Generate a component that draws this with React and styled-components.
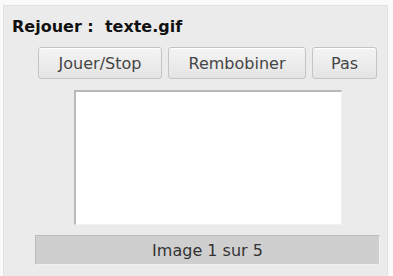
import React from 'react';
import styled, { createGlobalStyle } from 'styled-components';

const Global = createGlobalStyle`
    html, body {
        margin: 0;
        padding: 0;
        background: #fafafa;
    }
    body {
        font-family: "DejaVu Sans", "Liberation Sans", sans-serif;
    }
`

const Panel = styled.div`
    margin: 5px 5px 0 3px;
    height: 271px;
    box-sizing: border-box;
    background: #ebebeb;
    border: 1px solid #e2e2e2;
    border-bottom: none;
    padding: 10px 0 0 8px;
`

const Title = styled.div`
    font-size: 16px;
    font-weight: bold;
    color: #111;
    line-height: 21px;
    white-space: pre;
`

const Body = styled.div`
    width: 345px;
    margin: 10px 0 0 23px;
    display: flex;
    flex-direction: column;
    align-items: center;
`

const Toolbar = styled.div`
    display: flex;
    gap: 6px;
`

const Button = styled.button`
    height: 32px;
    width: ${p => p.w}px;
    box-sizing: border-box;
    font-family: inherit;
    font-size: 16px;
    color: #454545;
    background: linear-gradient(#f4f4f4, #e4e4e4);
    border: 1px solid #c4c4c4;
    border-radius: 3px;
    box-shadow: inset 0 1px 0 #fff;
    padding: 0;
`

const Screen = styled.div`
    margin-top: 11px;
    width: 268px;
    height: 135px;
    box-sizing: border-box;
    background: #fff;
    border-top: 2px solid #b8b8b8;
    border-left: 2px solid #b8b8b8;
    border-right: 1px solid #f2f2f2;
    border-bottom: 1px solid #f2f2f2;
`

const Status = styled.div`
    margin-top: 10px;
    align-self: stretch;
    height: 30px;
    box-sizing: border-box;
    background: #cfcfcf;
    border: 1px solid #bdbdbd;
    border-right-color: #f0f0f0;
    border-bottom-color: #f0f0f0;
    display: flex;
    align-items: center;
    justify-content: center;
    font-size: 16px;
    color: #333;
`

export default function App() {
    return (
        <>
            <Global />
            <Panel>
                <Title>Rejouer :  texte.gif</Title>
                <Body>
                    <Toolbar>
                        <Button w={124}>Jouer/Stop</Button>
                        <Button w={138}>Rembobiner</Button>
                        <Button w={65}>Pas</Button>
                    </Toolbar>
                    <Screen />
                    <Status>Image 1 sur 5</Status>
                </Body>
            </Panel>
        </>
    )
}
